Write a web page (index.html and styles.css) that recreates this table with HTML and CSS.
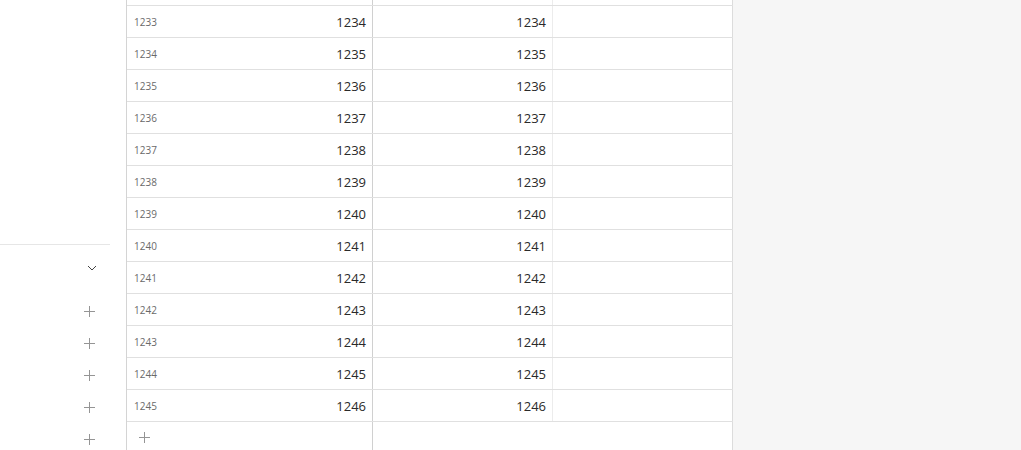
FILE: index.html
```html
<!DOCTYPE html>
<html lang="en">
<head>
    <meta charset="UTF-8">
    <title>Sheet</title>
    <link rel="stylesheet" href="styles.css">
</head>
<body>
    <div class="page">
        <!-- left panel -->
        <div class="sidebar">
            <div class="sidebar-top"></div>
            <div class="section-head">
                <svg class="chevron" width="10" height="6" viewBox="0 0 10 6"><path d="M1 1l4 4 4-4" fill="none" stroke="#444" stroke-width="1"/></svg>
            </div>
            <div class="add-line"><span class="plus"></span></div>
            <div class="add-line"><span class="plus"></span></div>
            <div class="add-line"><span class="plus"></span></div>
            <div class="add-line"><span class="plus"></span></div>
            <div class="add-line"><span class="plus"></span></div>
        </div>

        <!-- table -->
        <div class="sheet">
            <div class="row partial">
                <div class="cell c1"></div>
                <div class="cell c2"></div>
                <div class="cell c3"></div>
            </div>
            <div id="rows"></div>
            <div class="row add-row">
                <div class="cell c1"><span class="plus"></span></div>
                <div class="cell c2 last"></div>
            </div>
        </div>

        <div class="backdrop"></div>
    </div>

    <script>
        const rows = document.getElementById("rows");
        for (let n = 1233; n <= 1245; n++) {
            const row = document.createElement("div");
            row.className = "row";
            row.innerHTML =
                `<div class="cell c1"><span class="num">${n}</span><span class="val">${n + 1}</span></div>` +
                `<div class="cell c2"><span class="val">${n + 1}</span></div>` +
                `<div class="cell c3"></div>`;
            rows.appendChild(row);
        }
    </script>
</body>
</html>
```

FILE: styles.css
```css
body {
    margin: 0;
    font-family: "Open Sans", "Noto Sans", sans-serif;
    color: #333;
    overflow: hidden;
}
.page {
    display: flex;
    height: 450px;
}

/* left panel */
.sidebar {
    width: 126px;
    flex-shrink: 0;
    background: #fff;
}
.sidebar-top {
    height: 244px;
    width: 110px;
    border-bottom: 1px solid #e6e6e6;
}
.section-head {
    height: 50px;
    display: flex;
    justify-content: flex-end;
    padding-right: 29px;
    padding-top: 20px;
    box-sizing: border-box;
}
.chevron { display: block; }
.add-line {
    height: 32px;
    display: flex;
    align-items: center;
    justify-content: flex-end;
    padding-right: 31px;
}

.plus {
    position: relative;
    width: 11px;
    height: 11px;
    display: inline-block;
}
.plus::before,
.plus::after {
    content: "";
    position: absolute;
    background: #959595;
}
.plus::before { left: 0; right: 0; top: 5px; height: 1px; }
.plus::after { top: 0; bottom: 0; left: 5px; width: 1px; }

/* table */
.sheet {
    width: 606px;
    flex-shrink: 0;
    border-left: 1px solid #d4d4d4;
    background: #fff;
    display: flex;
    flex-direction: column;
}
.row {
    display: flex;
    height: 32px;
    border-bottom: 1px solid #e0e0e0;
    box-sizing: border-box;
}
.row.partial { height: 6px; }
.cell {
    box-sizing: border-box;
    display: flex;
    align-items: center;
    justify-content: space-between;
    padding: 0 6px 0 7px;
}
.c1 { width: 246px; border-right: 1px solid #d0d0d0; }
.c2 { width: 180px; border-right: 1px solid #ececec; justify-content: flex-end; }
.c3 { width: 180px; border-right: 1px solid #dcdcdc; }
.num {
    font-size: 10px;
    color: #6a6a6a;
}
.val {
    font-size: 13px;
    color: #2a2a2a;
}
.add-row {
    flex: 1;
    border-bottom: none;
}
.add-row .c1 {
    align-items: flex-start;
    padding: 10px 0 0 12px;
}
.add-row .last {
    width: 360px;
    border-right: 1px solid #dcdcdc;
}

.backdrop {
    flex: 1;
    background: #f6f6f6;
}
```
